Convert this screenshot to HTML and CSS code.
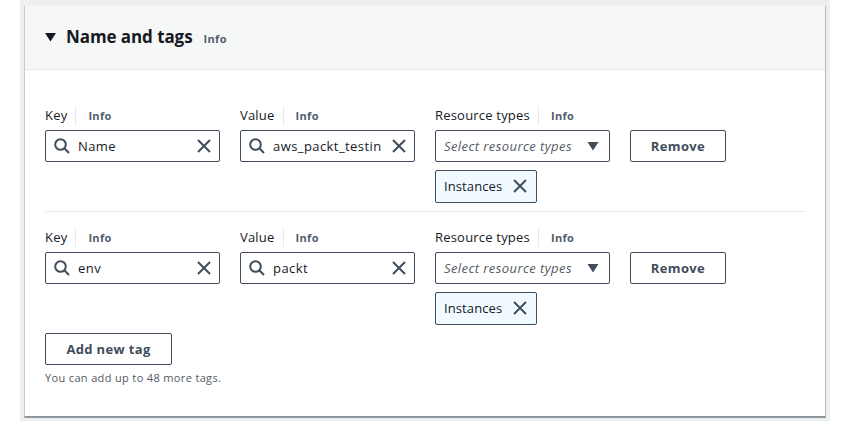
FILE: index.html
```html
<!DOCTYPE html>
<html>
  <head>
    <title>Name and tags</title>
    <link rel="stylesheet" href="styles.css">
  </head>
  <body>
    <div class="page">
      <section class="card">
        <header class="card-header">
          <svg class="caret" width="12" height="10" viewBox="0 0 12 10"><path d="M0 1h11L5.5 9.5z" fill="#16191f"/></svg>
          <h2>Name and tags</h2>
          <a class="info info-head">Info</a>
        </header>
        <div class="card-body">
          <div class="tag-row">
            <div class="field">
              <div class="label"><span class="label-text">Key</span><a class="info">Info</a></div>
              <div class="input">
                <svg class="search" width="16" height="16" viewBox="0 0 16 16"><circle cx="6.5" cy="6.5" r="5.3"/><path d="M10.3 10.3L15 15"/></svg>
                <span class="input-text">Name</span>
                <svg class="close" width="14" height="14" viewBox="0 0 14 14"><path d="M1 1l12 12M13 1L1 13"/></svg>
              </div>
            </div>
            <div class="field">
              <div class="label"><span class="label-text">Value</span><a class="info">Info</a></div>
              <div class="input">
                <svg class="search" width="16" height="16" viewBox="0 0 16 16"><circle cx="6.5" cy="6.5" r="5.3"/><path d="M10.3 10.3L15 15"/></svg>
                <span class="input-text">aws_packt_testin</span>
                <svg class="close" width="14" height="14" viewBox="0 0 14 14"><path d="M1 1l12 12M13 1L1 13"/></svg>
              </div>
            </div>
            <div class="field">
              <div class="label"><span class="label-text">Resource types</span><a class="info">Info</a></div>
              <div class="select">
                <span class="placeholder">Select resource types</span>
                <svg width="12" height="10" viewBox="0 0 12 10"><path d="M.5 1h11L6 9.5z" fill="#414d5c"/></svg>
              </div>
              <div class="token">
                <span>Instances</span>
                <svg class="close" width="14" height="14" viewBox="0 0 14 14"><path d="M1 1l12 12M13 1L1 13"/></svg>
              </div>
            </div>
            <button class="btn btn-remove" type="button">Remove</button>
          </div>
          <div class="tag-row tag-row-second">
            <div class="field">
              <div class="label"><span class="label-text">Key</span><a class="info">Info</a></div>
              <div class="input">
                <svg class="search" width="16" height="16" viewBox="0 0 16 16"><circle cx="6.5" cy="6.5" r="5.3"/><path d="M10.3 10.3L15 15"/></svg>
                <span class="input-text">env</span>
                <svg class="close" width="14" height="14" viewBox="0 0 14 14"><path d="M1 1l12 12M13 1L1 13"/></svg>
              </div>
            </div>
            <div class="field">
              <div class="label"><span class="label-text">Value</span><a class="info">Info</a></div>
              <div class="input">
                <svg class="search" width="16" height="16" viewBox="0 0 16 16"><circle cx="6.5" cy="6.5" r="5.3"/><path d="M10.3 10.3L15 15"/></svg>
                <span class="input-text">packt</span>
                <svg class="close" width="14" height="14" viewBox="0 0 14 14"><path d="M1 1l12 12M13 1L1 13"/></svg>
              </div>
            </div>
            <div class="field">
              <div class="label"><span class="label-text">Resource types</span><a class="info">Info</a></div>
              <div class="select">
                <span class="placeholder">Select resource types</span>
                <svg width="12" height="10" viewBox="0 0 12 10"><path d="M.5 1h11L6 9.5z" fill="#414d5c"/></svg>
              </div>
              <div class="token">
                <span>Instances</span>
                <svg class="close" width="14" height="14" viewBox="0 0 14 14"><path d="M1 1l12 12M13 1L1 13"/></svg>
              </div>
            </div>
            <button class="btn btn-remove" type="button">Remove</button>
          </div>
          <button class="btn btn-add" type="button">Add new tag</button>
          <p class="hint">You can add up to 48 more tags.</p>
        </div>
      </section>
    </div>
  </body>
</html>
```

FILE: styles.css
```css
* {
  box-sizing: border-box;
}

html,
body {
  height: 100%;
}

body {
  margin: 0;
  background-color: #fff;
  font-family: "Open Sans", sans-serif;
  color: #16191f;
  overflow: hidden;
}

.page {
  width: 810px;
  height: 421px;
  margin-left: 20px;
  padding: 6px 4px 3px 4px;
  background-color: #eeefef;
}

.card {
  height: 412px;
  background-color: #fff;
  border-left: 1px solid #c6cacd;
  border-right: 1px solid #b4b9bd;
  border-bottom: 2px solid #8d969e;
}

.card-header {
  display: flex;
  align-items: center;
  height: 64px;
  padding-left: 20px;
  padding-bottom: 2px;
  background-color: #f6f7f7;
  border-bottom: 1px solid #e6e8e9;
}

.caret {
  margin-right: 9px;
}

h2 {
  margin: 0;
  font-size: 17px;
  font-weight: 700;
  line-height: 24px;
  letter-spacing: -0.08px;
}

.info {
  font-size: 11px;
  font-weight: 700;
  letter-spacing: 0.35px;
  color: #4f5d6e;
}

.info-head {
  margin-left: 11px;
  padding-top: 3px;
}

.card-body {
  padding: 35px 20px 0 20px;
}

.tag-row {
  display: flex;
  align-items: flex-start;
  gap: 20px;
  padding-bottom: 8px;
  border-bottom: 1px solid #e6e8e9;
}

.tag-row-second {
  padding-top: 15px;
  padding-bottom: 0;
  border-bottom: 0;
}

.field {
  width: 175px;
}

.label {
  display: flex;
  align-items: center;
  height: 20px;
  margin-bottom: 5px;
  font-size: 13px;
}

.label-text {
  padding-right: 8px;
  border-right: 1px solid #e6e8e9;
  line-height: 19px;
  letter-spacing: 0.2px;
}

.label .info {
  margin-left: 12px;
}

.input,
.select {
  display: flex;
  align-items: center;
  height: 32px;
  padding: 0 8px;
  background-color: #fff;
  border: 1px solid #414d5c;
  border-radius: 2px;
  font-size: 13px;
}

.input svg,
.token svg {
  flex: none;
  fill: none;
  stroke: #414d5c;
  stroke-width: 2;
}

.input-text {
  flex: 1;
  margin-left: 8px;
  letter-spacing: 0.43px;
  white-space: nowrap;
  overflow: hidden;
}

.select {
  justify-content: space-between;
  padding: 0 10px 0 8px;
}

.placeholder {
  font-style: italic;
  letter-spacing: 0.42px;
  color: #545b64;
}

.token {
  display: flex;
  align-items: center;
  gap: 11px;
  width: 102px;
  height: 33px;
  margin-top: 8px;
  padding-left: 8px;
  padding-bottom: 1px;
  background-color: #f1faff;
  border: 1px solid #414d5c;
  border-radius: 2px;
  font-size: 13px;
  letter-spacing: 0.1px;
}

.btn {
  display: block;
  height: 32px;
  padding: 0;
  background-color: #fff;
  border: 1px solid #414d5c;
  border-radius: 2px;
  font-family: "Open Sans", sans-serif;
  font-size: 13px;
  font-weight: 700;
  letter-spacing: 0.35px;
  color: #414d5c;
}

.btn-remove {
  width: 96px;
  margin-top: 25px;
}

.btn-add {
  width: 127px;
  margin-top: 8px;
}

.hint {
  margin: 5px 0 0 0;
  font-size: 11px;
  line-height: 16px;
  letter-spacing: 0.35px;
  color: #545b64;
}
```
